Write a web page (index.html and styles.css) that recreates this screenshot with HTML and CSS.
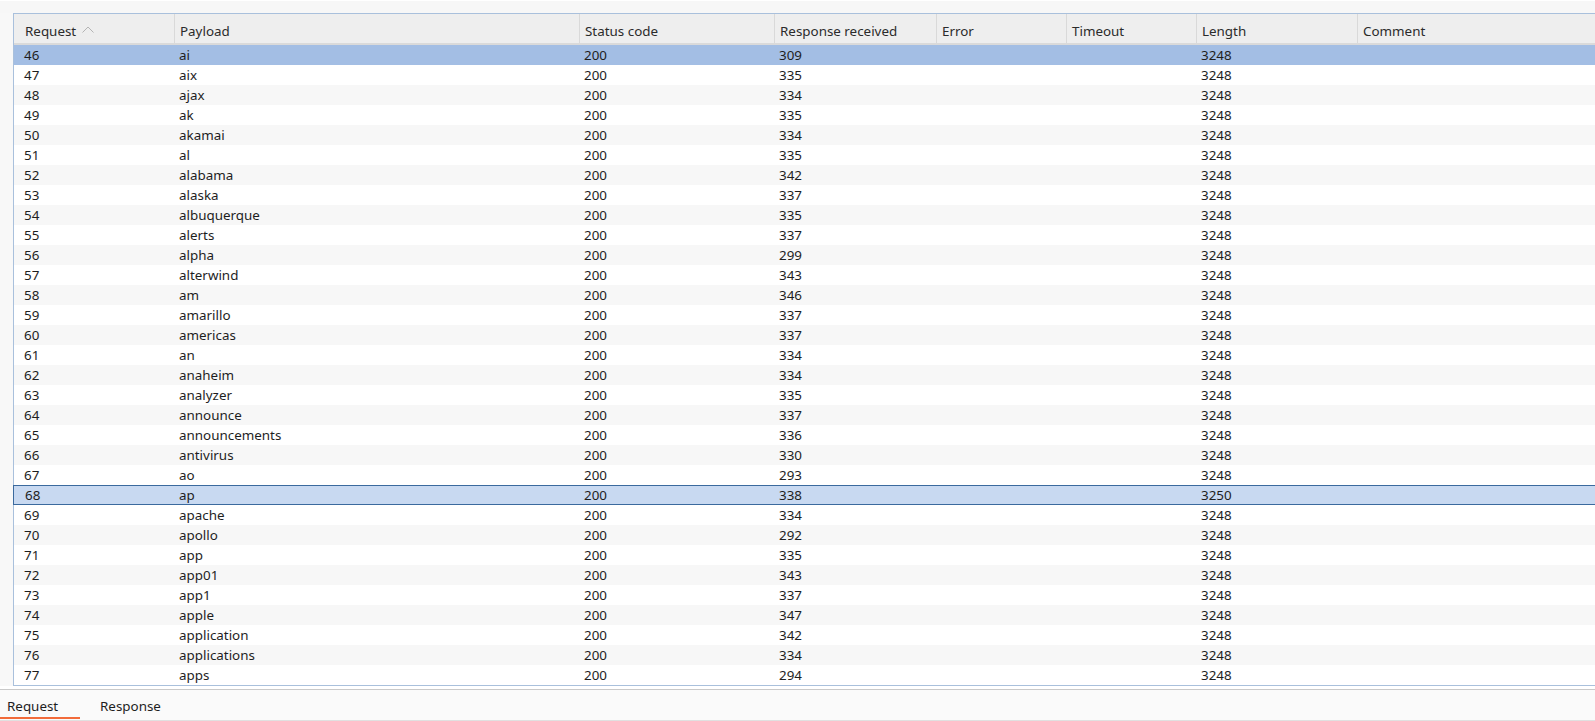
FILE: index.html
```html
<!DOCTYPE html>
<html>
<head>
<meta charset="utf-8">
<link rel="stylesheet" href="styles.css">
</head>
<body>
<div class="page">
  <div class="topstrip"></div>
  <div class="frame">
    <div class="row head">
      <div class="cell c1">Request <svg class="sort" width="12" height="7" viewBox="0 0 12 7"><polyline points="0.5,6.5 6,1 11.5,6.5" fill="none" stroke="#b4b4b4" stroke-width="1"/></svg></div>
      <div class="cell">Payload</div>
      <div class="cell">Status code</div>
      <div class="cell">Response received</div>
      <div class="cell">Error</div>
      <div class="cell">Timeout</div>
      <div class="cell">Length</div>
      <div class="cell last">Comment</div>
    </div>
    <div class="body" id="rows">
      <div class="row sel"><div class="cell c1">46</div><div class="cell">ai</div><div class="cell">200</div><div class="cell">309</div><div class="cell"></div><div class="cell"></div><div class="cell">3248</div><div class="cell"></div></div>
      <div class="row odd"><div class="cell c1">47</div><div class="cell">aix</div><div class="cell">200</div><div class="cell">335</div><div class="cell"></div><div class="cell"></div><div class="cell">3248</div><div class="cell"></div></div>
      <div class="row even"><div class="cell c1">48</div><div class="cell">ajax</div><div class="cell">200</div><div class="cell">334</div><div class="cell"></div><div class="cell"></div><div class="cell">3248</div><div class="cell"></div></div>
      <div class="row odd"><div class="cell c1">49</div><div class="cell">ak</div><div class="cell">200</div><div class="cell">335</div><div class="cell"></div><div class="cell"></div><div class="cell">3248</div><div class="cell"></div></div>
      <div class="row even"><div class="cell c1">50</div><div class="cell">akamai</div><div class="cell">200</div><div class="cell">334</div><div class="cell"></div><div class="cell"></div><div class="cell">3248</div><div class="cell"></div></div>
      <div class="row odd"><div class="cell c1">51</div><div class="cell">al</div><div class="cell">200</div><div class="cell">335</div><div class="cell"></div><div class="cell"></div><div class="cell">3248</div><div class="cell"></div></div>
      <div class="row even"><div class="cell c1">52</div><div class="cell">alabama</div><div class="cell">200</div><div class="cell">342</div><div class="cell"></div><div class="cell"></div><div class="cell">3248</div><div class="cell"></div></div>
      <div class="row odd"><div class="cell c1">53</div><div class="cell">alaska</div><div class="cell">200</div><div class="cell">337</div><div class="cell"></div><div class="cell"></div><div class="cell">3248</div><div class="cell"></div></div>
      <div class="row even"><div class="cell c1">54</div><div class="cell">albuquerque</div><div class="cell">200</div><div class="cell">335</div><div class="cell"></div><div class="cell"></div><div class="cell">3248</div><div class="cell"></div></div>
      <div class="row odd"><div class="cell c1">55</div><div class="cell">alerts</div><div class="cell">200</div><div class="cell">337</div><div class="cell"></div><div class="cell"></div><div class="cell">3248</div><div class="cell"></div></div>
      <div class="row even"><div class="cell c1">56</div><div class="cell">alpha</div><div class="cell">200</div><div class="cell">299</div><div class="cell"></div><div class="cell"></div><div class="cell">3248</div><div class="cell"></div></div>
      <div class="row odd"><div class="cell c1">57</div><div class="cell">alterwind</div><div class="cell">200</div><div class="cell">343</div><div class="cell"></div><div class="cell"></div><div class="cell">3248</div><div class="cell"></div></div>
      <div class="row even"><div class="cell c1">58</div><div class="cell">am</div><div class="cell">200</div><div class="cell">346</div><div class="cell"></div><div class="cell"></div><div class="cell">3248</div><div class="cell"></div></div>
      <div class="row odd"><div class="cell c1">59</div><div class="cell">amarillo</div><div class="cell">200</div><div class="cell">337</div><div class="cell"></div><div class="cell"></div><div class="cell">3248</div><div class="cell"></div></div>
      <div class="row even"><div class="cell c1">60</div><div class="cell">americas</div><div class="cell">200</div><div class="cell">337</div><div class="cell"></div><div class="cell"></div><div class="cell">3248</div><div class="cell"></div></div>
      <div class="row odd"><div class="cell c1">61</div><div class="cell">an</div><div class="cell">200</div><div class="cell">334</div><div class="cell"></div><div class="cell"></div><div class="cell">3248</div><div class="cell"></div></div>
      <div class="row even"><div class="cell c1">62</div><div class="cell">anaheim</div><div class="cell">200</div><div class="cell">334</div><div class="cell"></div><div class="cell"></div><div class="cell">3248</div><div class="cell"></div></div>
      <div class="row odd"><div class="cell c1">63</div><div class="cell">analyzer</div><div class="cell">200</div><div class="cell">335</div><div class="cell"></div><div class="cell"></div><div class="cell">3248</div><div class="cell"></div></div>
      <div class="row even"><div class="cell c1">64</div><div class="cell">announce</div><div class="cell">200</div><div class="cell">337</div><div class="cell"></div><div class="cell"></div><div class="cell">3248</div><div class="cell"></div></div>
      <div class="row odd"><div class="cell c1">65</div><div class="cell">announcements</div><div class="cell">200</div><div class="cell">336</div><div class="cell"></div><div class="cell"></div><div class="cell">3248</div><div class="cell"></div></div>
      <div class="row even"><div class="cell c1">66</div><div class="cell">antivirus</div><div class="cell">200</div><div class="cell">330</div><div class="cell"></div><div class="cell"></div><div class="cell">3248</div><div class="cell"></div></div>
      <div class="row odd"><div class="cell c1">67</div><div class="cell">ao</div><div class="cell">200</div><div class="cell">293</div><div class="cell"></div><div class="cell"></div><div class="cell">3248</div><div class="cell"></div></div>
      <div class="row focus"><div class="cell c1">68</div><div class="cell">ap</div><div class="cell">200</div><div class="cell">338</div><div class="cell"></div><div class="cell"></div><div class="cell">3250</div><div class="cell"></div></div>
      <div class="row odd"><div class="cell c1">69</div><div class="cell">apache</div><div class="cell">200</div><div class="cell">334</div><div class="cell"></div><div class="cell"></div><div class="cell">3248</div><div class="cell"></div></div>
      <div class="row even"><div class="cell c1">70</div><div class="cell">apollo</div><div class="cell">200</div><div class="cell">292</div><div class="cell"></div><div class="cell"></div><div class="cell">3248</div><div class="cell"></div></div>
      <div class="row odd"><div class="cell c1">71</div><div class="cell">app</div><div class="cell">200</div><div class="cell">335</div><div class="cell"></div><div class="cell"></div><div class="cell">3248</div><div class="cell"></div></div>
      <div class="row even"><div class="cell c1">72</div><div class="cell">app01</div><div class="cell">200</div><div class="cell">343</div><div class="cell"></div><div class="cell"></div><div class="cell">3248</div><div class="cell"></div></div>
      <div class="row odd"><div class="cell c1">73</div><div class="cell">app1</div><div class="cell">200</div><div class="cell">337</div><div class="cell"></div><div class="cell"></div><div class="cell">3248</div><div class="cell"></div></div>
      <div class="row even"><div class="cell c1">74</div><div class="cell">apple</div><div class="cell">200</div><div class="cell">347</div><div class="cell"></div><div class="cell"></div><div class="cell">3248</div><div class="cell"></div></div>
      <div class="row odd"><div class="cell c1">75</div><div class="cell">application</div><div class="cell">200</div><div class="cell">342</div><div class="cell"></div><div class="cell"></div><div class="cell">3248</div><div class="cell"></div></div>
      <div class="row even"><div class="cell c1">76</div><div class="cell">applications</div><div class="cell">200</div><div class="cell">334</div><div class="cell"></div><div class="cell"></div><div class="cell">3248</div><div class="cell"></div></div>
      <div class="row odd"><div class="cell c1">77</div><div class="cell">apps</div><div class="cell">200</div><div class="cell">294</div><div class="cell"></div><div class="cell"></div><div class="cell">3248</div><div class="cell"></div></div>
    </div>
  </div>
  <div class="gap"></div>
  <div class="tabs">
    <div class="tab active">Request</div>
    <div class="tab">Response</div>
  </div>
</div>
</body>
</html>
```

FILE: styles.css
```css
html, body {
  margin: 0;
  padding: 0;
  background: #f8f8f8;
  overflow: hidden;
}
.page {
  width: 1595px;
  height: 721px;
  font-family: "Noto Sans", "Open Sans", sans-serif;
  font-size: 13.4px;
  color: #1e1e1e;
  display: flex;
  flex-direction: column;
}
.topstrip {
  height: 13px;
  border-top: 1px solid #ffffff;
  box-sizing: border-box;
  background: #f7f7f7;
}
.frame {
  margin-left: 13px;
  border-top: 1px solid #a9c0dc;
  border-left: 1px solid #a9c0dc;
  border-bottom: 1px solid #a9c0dc;
  background: #ffffff;
}
.row {
  display: grid;
  grid-template-columns: 161px 405px 195px 162px 130px 130px 161px 1fr;
  height: 20px;
  box-sizing: border-box;
  line-height: 20px;
}
.row.head {
  height: 31px;
  line-height: 30px;
  background: #eeeeee;
  border-bottom: 2px solid #dadada;
  color: #2b2b2b;
}
.head .cell {
  border-right: 1px solid #d9d9d9;
  display: flex;
  align-items: center;
  padding-top: 4px;
}
.head .cell.last {
  border-right: none;
}
.cell {
  padding-left: 4px;
  white-space: nowrap;
  overflow: hidden;
}
.cell.c1 {
  padding-left: 10px;
}
.row.head .cell.c1 {
  padding-left: 11px;
}
.head .cell:not(.c1) {
  padding-left: 5px;
}
.sort {
  margin-left: 6px;
  margin-bottom: 2px;
}
.row.odd {
  background: #ffffff;
}
.row.even {
  background: #f7f7f7;
}
.row.sel {
  background: #a3bee4;
}
.row.focus {
  background: #c8d9f1;
  border-top: 1px solid #3b6a9e;
  border-bottom: 1px solid #3b6a9e;
  margin-left: -1px;
  border-left: 1px solid #3b6a9e;
  line-height: 18px;
}
.row.focus .cell.c1 {
  padding-left: 11px;
}
.gap {
  height: 3px;
  border-bottom: 1px solid #c9c9c9;
  background: #ffffff;
}
.tabs {
  flex: 1;
  display: flex;
  background: #fafafa;
  border-bottom: 1px solid #e0e0e0;
  box-sizing: border-box;
}
.tab {
  padding: 0 7px;
  line-height: 33px;
  height: 29px;
  box-sizing: border-box;
  margin-right: 13px;
}
.tab.active {
  border-bottom: 2px solid #f26b3a;
  width: 80px;
  padding-left: 7px;
  margin-right: 13px;
}
```
